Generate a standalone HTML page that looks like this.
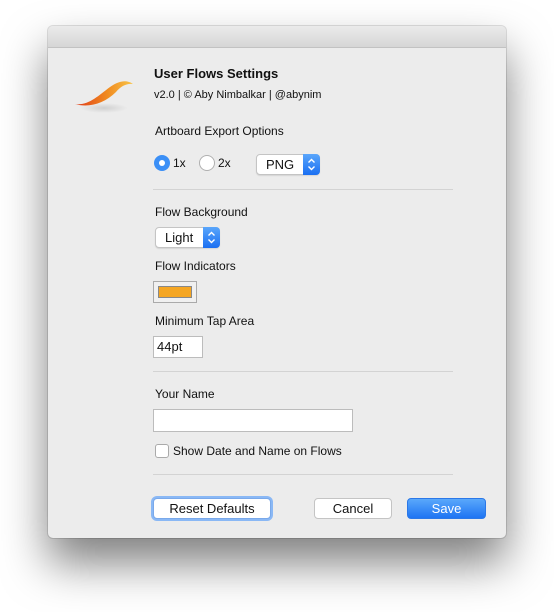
<!DOCTYPE html><html><head><style>
*{margin:0;padding:0;box-sizing:border-box}
body{width:554px;height:612px;background:#fff;position:relative;font-family:"Liberation Sans",sans-serif;color:#111;overflow:hidden}
.win{position:absolute;left:48px;top:26px;width:458px;height:512px;background:#ececec;border-radius:5px;box-shadow:0 25px 45px rgba(0,0,0,.5),0 0 0 1px rgba(0,0,0,.12)}
.tb{position:absolute;left:0;top:0;width:458px;height:22px;background:linear-gradient(#ebebeb,#d6d6d6);border-bottom:1px solid #c2c2c2;border-radius:5px 5px 0 0}
.t{position:absolute;font-size:12px;white-space:nowrap}
.sep{position:absolute;left:105px;width:300px;height:1px;background:#d3d3d3}
.pop{position:absolute;background:#fff;border:1px solid #c4c4c4;border-radius:4px;font-size:13px;padding-left:9px;line-height:19px;box-shadow:0 1px 1px rgba(0,0,0,.1)}
.pop svg{position:absolute;right:-1px;top:-1px;width:17px;height:21px;border-radius:0 4px 4px 0;background:linear-gradient(#5aa6fb,#1a6ff2)}
.btn{position:absolute;height:21px;background:#fff;border:1px solid #c4c4c4;border-radius:4px;font-size:13px;text-align:center;line-height:19px}
.fld{position:absolute;background:#fff;border:1px solid #bcbcbc;font-size:13px;padding-left:3px;line-height:20px}
</style></head><body>
<div class="win">
<div class="tb"></div>
<svg style="position:absolute;left:24px;top:48px" width="66" height="42" viewBox="0 0 66 42"><defs><linearGradient id="g" x1="0" x2="1"><stop offset="0" stop-color="#e03a18"/><stop offset=".55" stop-color="#f08a20"/><stop offset="1" stop-color="#f8c447"/></linearGradient><radialGradient id="s"><stop offset="0" stop-color="rgba(0,0,0,.12)"/><stop offset="1" stop-color="rgba(0,0,0,0)"/></radialGradient></defs><ellipse cx="32" cy="34" rx="24" ry="5" fill="url(#s)"/><path d="M3 30 C16 32 26 22 38 13 C48 6 56 6 61 10 C54 9 48 13 44 18 C32 30 16 34 3 30Z" fill="url(#g)"/></svg>
<div class="t" style="left:106px;top:40px;font-weight:bold;font-size:13px">User Flows Settings</div>
<div class="t" style="left:106px;top:63px;font-size:11px">v2.0 | © Aby Nimbalkar | @abynim</div>
<div class="t" style="left:107px;top:98px">Artboard Export Options</div>
<div style="position:absolute;left:106px;top:129px;width:16px;height:16px;border-radius:50%;background:#3b8ff6"><div style="position:absolute;left:5px;top:5px;width:6px;height:6px;border-radius:50%;background:#fff"></div></div>
<div class="t" style="left:125px;top:130px">1x</div>
<div style="position:absolute;left:151px;top:129px;width:16px;height:16px;border-radius:50%;background:#fff;border:1px solid #b0b0b0"></div>
<div class="t" style="left:170px;top:130px">2x</div>
<div class="pop" style="left:208px;top:128px;width:64px;height:21px">PNG<svg viewBox="0 0 17 21"><path d="M5.5 8.5L8.5 5.5L11.5 8.5M5.5 12.5L8.5 15.5L11.5 12.5" stroke="#fff" stroke-width="1.4" fill="none"/></svg></div>
<div class="sep" style="top:163px"></div>
<div class="t" style="left:107px;top:179px">Flow Background</div>
<div class="pop" style="left:107px;top:201px;width:65px;height:21px">Light<svg viewBox="0 0 17 21"><path d="M5.5 8.5L8.5 5.5L11.5 8.5M5.5 12.5L8.5 15.5L11.5 12.5" stroke="#fff" stroke-width="1.4" fill="none"/></svg></div>
<div class="t" style="left:107px;top:233px">Flow Indicators</div>
<div style="position:absolute;left:105px;top:255px;width:44px;height:22px;border:1px solid #aaa;background:#f0f0f0"><div style="position:absolute;left:4px;top:4px;width:34px;height:12px;background:#f5a623;border:1px solid #888"></div></div>
<div class="t" style="left:107px;top:288px">Minimum Tap Area</div>
<div class="fld" style="left:105px;top:310px;width:50px;height:22px">44pt</div>
<div class="sep" style="top:345px"></div>
<div class="t" style="left:107px;top:361px">Your Name</div>
<div class="fld" style="left:105px;top:383px;width:200px;height:23px"></div>
<div style="position:absolute;left:107px;top:418px;width:14px;height:14px;border:1px solid #aaa;border-radius:3px;background:#fff"></div>
<div class="t" style="left:125px;top:418px">Show Date and Name on Flows</div>
<div class="sep" style="top:448px"></div>
<div class="btn" style="left:105px;top:472px;width:118px;box-shadow:0 0 0 2px #8ab8f5;border-color:#7aa9ea">Reset Defaults</div>
<div class="btn" style="left:266px;top:472px;width:78px">Cancel</div>
<div class="btn" style="left:359px;top:472px;width:79px;background:linear-gradient(#5aa8fb,#1e74f3);border-color:#2b78e8;color:#fff">Save</div>
</div>
</body></html>
